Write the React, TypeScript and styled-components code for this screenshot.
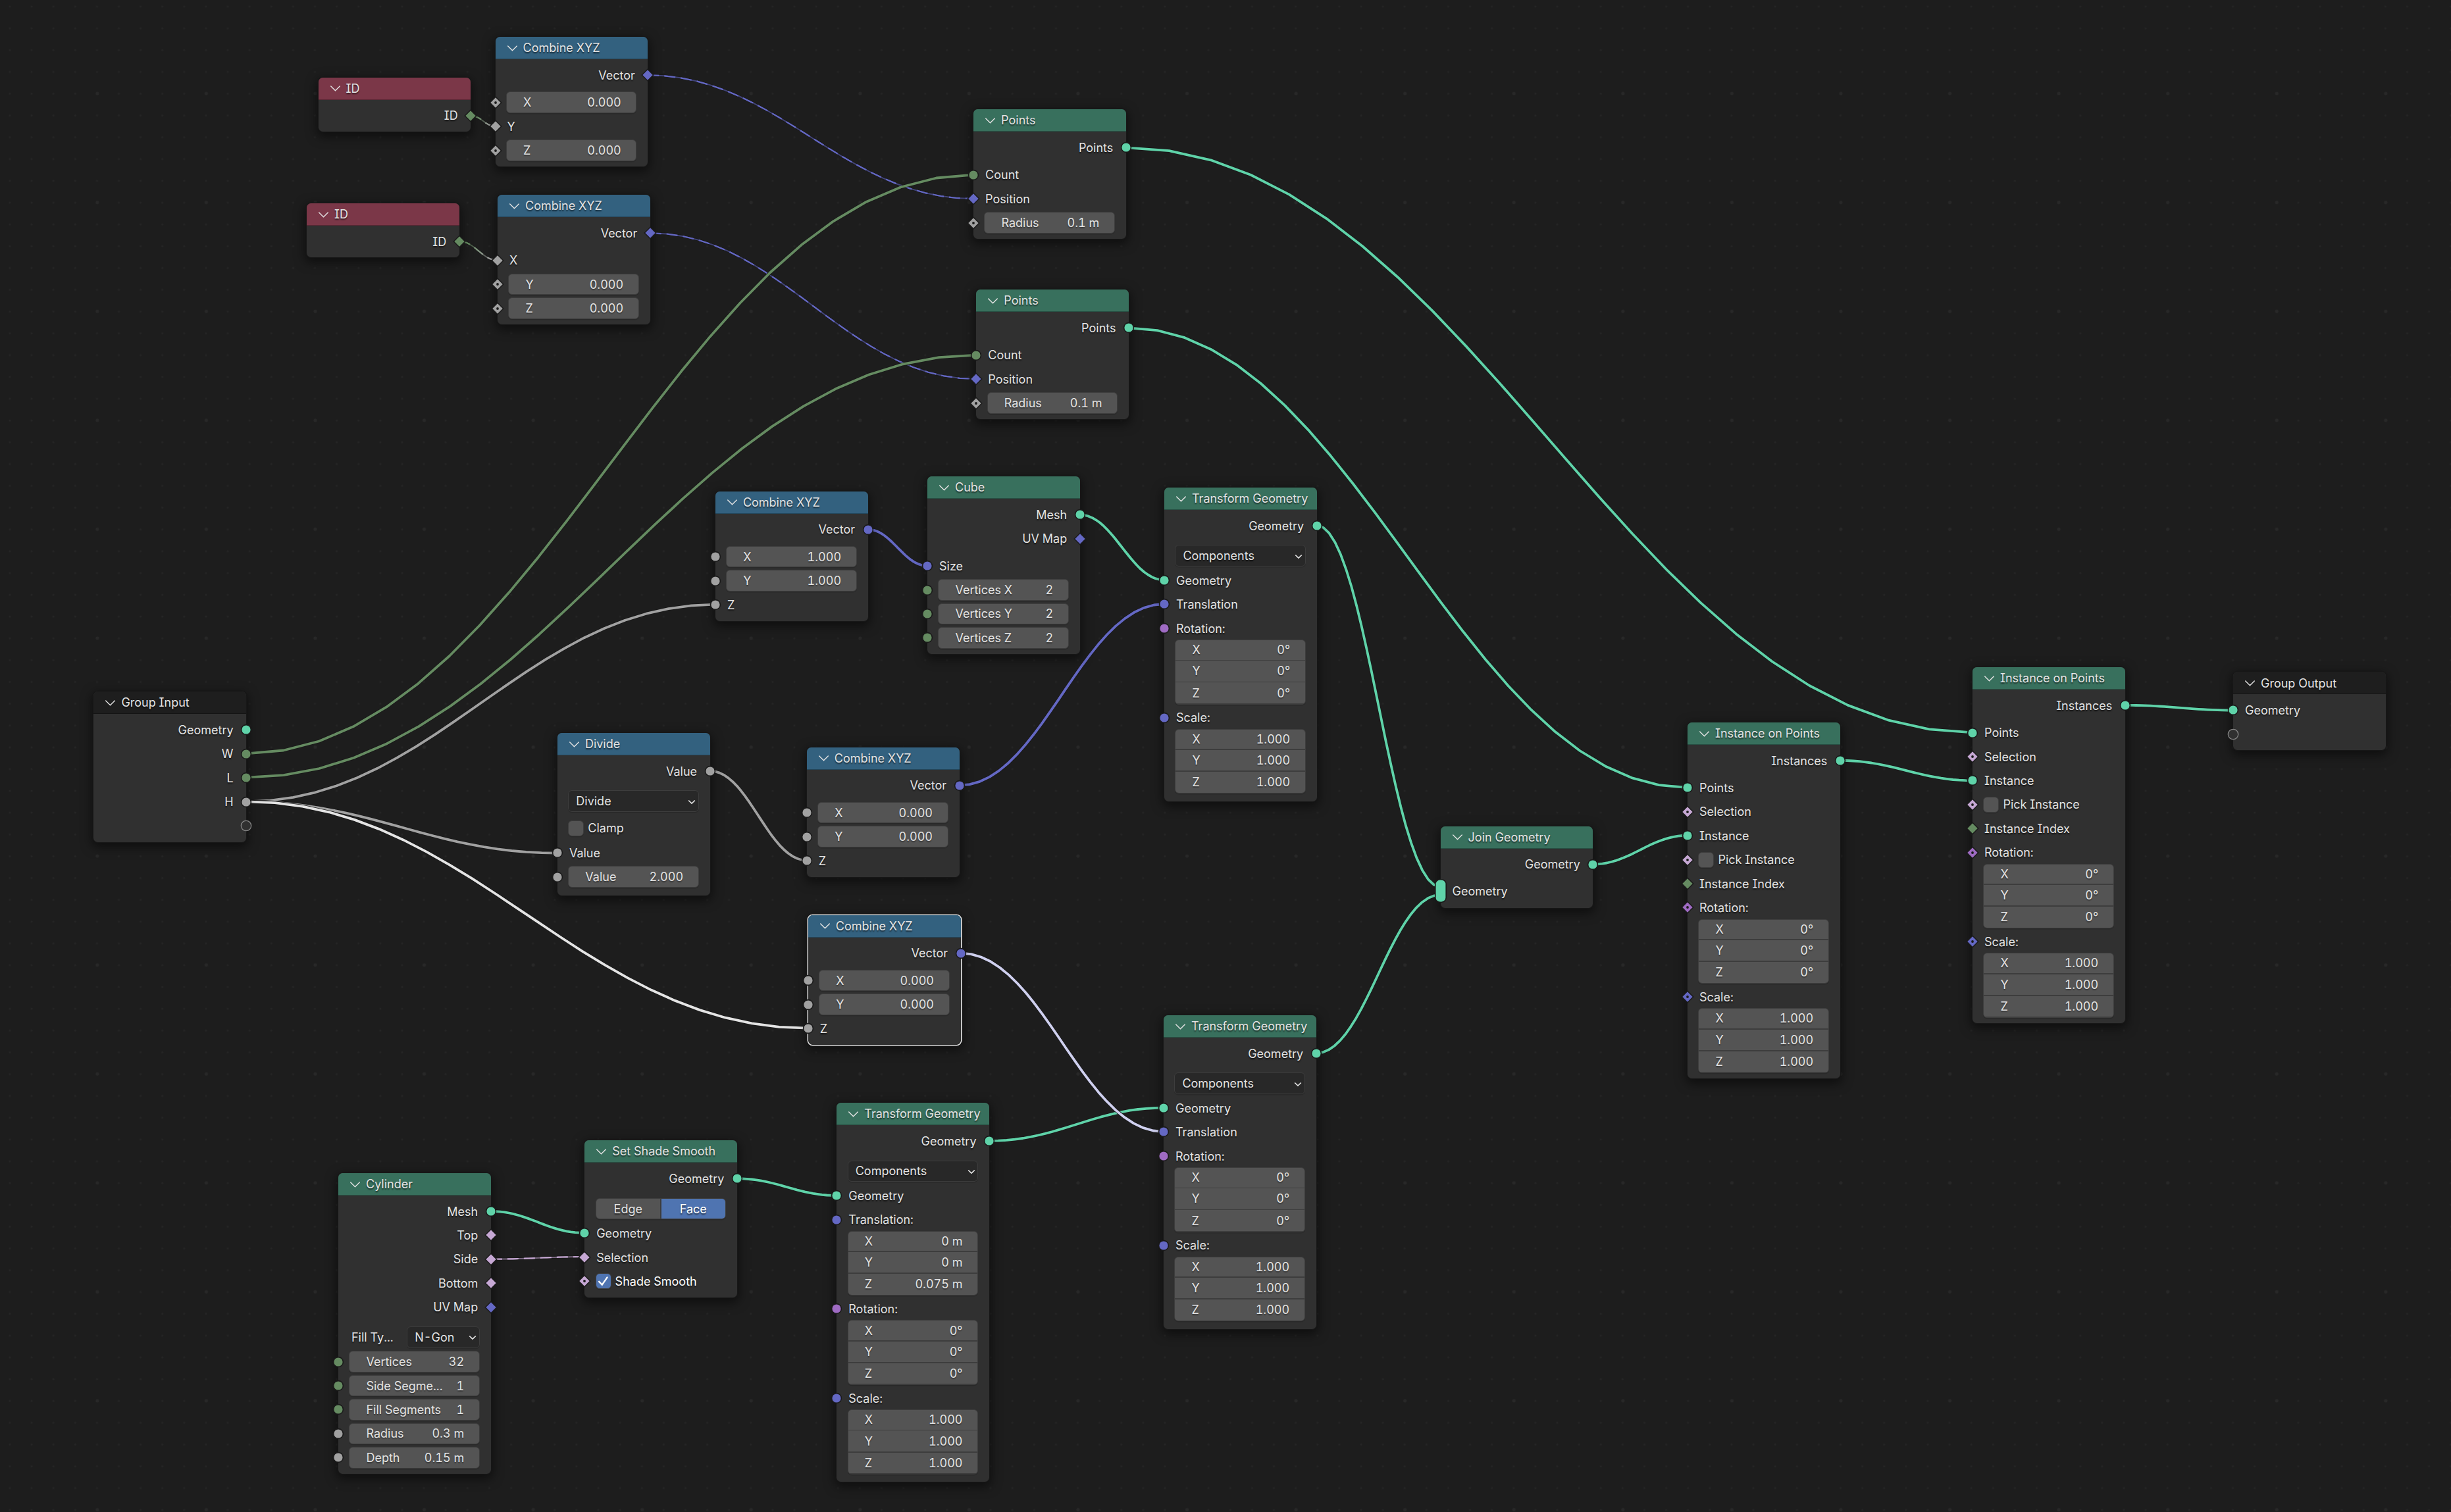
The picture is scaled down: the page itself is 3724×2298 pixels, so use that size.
import React from 'react';
import styled, { createGlobalStyle, css } from 'styled-components';

/* One interface unit of the editor, in pixels. */
const U = 1.6557;
const ROW = 20 * U;
const NODE_W = 231.8;

const Global = createGlobalStyle`
  html, body { margin: 0; padding: 0; background: #1d1d1d; }
`;

const tone = {
  converter: '#33617f',
  input: '#7b3748',
  geometry: '#38705d',
  group: '#1e1e1e',
};

const sock = {
  geometry: '#5fd3a9',
  int: '#658b61',
  float: '#a1a1a1',
  vector: '#6468c4',
  bool: '#c6a8d4',
  rotation: '#9f6bc3',
};

type Tone = keyof typeof tone;
type Sock = keyof typeof sock;
type Shape = 'circle' | 'diamond' | 'diamondDot' | 'virtual' | 'multi';

const Canvas = styled.main`
  position: relative;
  width: 3724px;
  height: 2298px;
  overflow: hidden;
  background: #1d1d1d;
  color: #e3e3e3;
  font-family: Inter, 'Liberation Sans', sans-serif;
  font-size: 18px;
  font-feature-settings: 'tnum', 'cv08';
  line-height: 1;
`;

const Wires = styled.svg`
  position: absolute;
  inset: 0;
`;

const NodeBox = styled.section<{ $selected?: boolean }>`
  position: absolute;
  width: ${NODE_W}px;
  border-radius: 6.5px;
  background: #303030;
  box-shadow: 0 0 0 1.3px ${p => (p.$selected ? '#fff' : '#171717')}, 0 5px 16px 3px rgba(0, 0, 0, 0.5);
`;

const Header = styled.header<{ $tone: Tone }>`
  display: flex;
  align-items: center;
  gap: 9px;
  box-sizing: border-box;
  height: 34px;
  padding: 1.6px 0 0 18px;
  border-radius: 6.5px 6.5px 0 0;
  background: ${p => tone[p.$tone]};
  border-bottom: 1.3px solid rgba(0, 0, 0, 0.28);
  text-shadow: 0 1.5px 2px rgba(0, 0, 0, 0.6);
  white-space: nowrap;
`;

const Body = styled.div`
  display: flex;
  flex-direction: column;
  padding-top: 7.6px;
`;

const Group = styled.div<{ $top?: number; $gap?: number }>`
  display: flex;
  flex-direction: column;
  gap: ${p => p.$gap ?? 2 * U}px;
  margin-top: ${p => p.$top ?? 0}px;
`;

const Row = styled.div<{ $out?: boolean; $label?: boolean }>`
  position: relative;
  display: flex;
  align-items: center;
  box-sizing: border-box;
  height: ${ROW}px;
  padding: 0 17px 0 16.4px;
  text-shadow: 0 1.5px 2px rgba(0, 0, 0, 0.6);
  white-space: nowrap;
  ${p => p.$label && css`padding: 1.3px 19.6px 0 18px;`}
  ${p => p.$out && css`justify-content: flex-end;`}
`;

const SocketMark = styled.svg<{ $out?: boolean }>`
  position: absolute;
  top: 50%;
  ${p => (p.$out ? 'right: -20px;' : 'left: -20px;')}
  width: 40px;
  height: 40px;
  margin-top: -20px;
  overflow: visible;
`;

const widget = css`
  box-sizing: border-box;
  border: 1.6px solid #3d3d3d;
  border-radius: 6px;
  box-shadow: 0 1.5px 0 rgba(0, 0, 0, 0.14);
`;

const Field = styled.div`
  ${widget}
  display: flex;
  flex: 1;
  align-items: center;
  justify-content: space-between;
  height: 32.6px;
  padding: 0.9px 22.6px 0 25px;
  background: #545454;
  text-shadow: 0 1.5px 1.5px rgba(0, 0, 0, 0.35);
`;

const Dropdown = styled.div<{ $width?: number }>`
  ${widget}
  display: flex;
  flex: ${p => (p.$width ? `0 0 ${p.$width}px` : '1')};
  align-items: center;
  justify-content: space-between;
  height: 32.6px;
  padding: 0.9px 3.6px 0 11px;
  background: #282828;
`;

const FillLabel = styled.span`
  flex: 1;
  padding: 1px 0 0 3.6px;
`;

const Segments = styled.div`
  ${widget}
  display: grid;
  grid-template-columns: 1fr 1fr;
  gap: 1.5px;
  flex: 1;
  height: 31.6px;
  overflow: hidden;
  background: #3d3d3d;
`;

const Segment = styled.div<{ $on?: boolean }>`
  display: flex;
  align-items: center;
  justify-content: center;
  padding-top: 1px;
  background: ${p => (p.$on ? '#4f74b1' : '#545454')};
  color: ${p => (p.$on ? '#fff' : '#e3e3e3')};
`;

const CheckBox = styled.span<{ $on?: boolean }>`
  ${widget}
  display: flex;
  flex: none;
  align-items: center;
  justify-content: center;
  width: 24px;
  height: 24px;
  margin-right: 6px;
  background: ${p => (p.$on ? '#4f74b1' : '#545454')};
`;

const CheckLabel = styled.span<{ $on?: boolean }>`
  padding-top: 1.2px;
  color: ${p => (p.$on ? '#fff' : '#e3e3e3')};
`;

const Block = styled.div`
  ${widget}
  display: grid;
  grid-template-rows: 29.7px 31.4px 31.6px;
  gap: 1.7px;
  height: 98.6px;
  margin: -2.8px 17px 0.2px 16.4px;
  padding-bottom: 0.4px;
  overflow: hidden;
  background: #3d3d3d;
`;

const BlockRow = styled.div`
  display: flex;
  align-items: center;
  justify-content: space-between;
  padding: 0.7px 22.6px 0 25px;
  background: #545454;
  text-shadow: 0 1.5px 1.5px rgba(0, 0, 0, 0.35);
`;

const Collapse = () => (
  <svg width="15" height="9" viewBox="0 0 15 9" fill="none">
    <path d="M.7.9 7.5 7.7 14.3.9" stroke="#e3e3e3" strokeWidth="1.4" strokeLinecap="round" />
  </svg>
);

const Caret = () => (
  <svg width="12" height="9" viewBox="0 0 12 9" fill="none">
    <path d="M1.2 2.5 6 7l4.8-4.5" stroke="#e3e3e3" strokeWidth="1.7" />
  </svg>
);

const Tick = () => (
  <svg width="17" height="17" viewBox="0 0 17 17" fill="none">
    <path d="M2.2 8.8 6.8 13.6 14.6 2.4" stroke="#fff" strokeWidth="2.4" strokeLinecap="round" />
  </svg>
);

const Socket = ({ type = 'float', shape = 'circle', out }: { type?: Sock; shape?: Shape; out?: boolean }) => (
  <SocketMark $out={out} viewBox="-20 -20 40 40">
    {shape === 'circle' && <circle r="7.4" fill={sock[type]} stroke="#1a1a1a" strokeWidth="1.6" />}
    {shape === 'virtual' && <circle r="7.7" fill="#303030" stroke="#868686" strokeWidth="1.3" />}
    {shape === 'multi' && (
      <rect x="-8.2" y="-17.2" width="16.4" height="34.4" rx="7" fill={sock[type]} stroke="#1a1a1a" strokeWidth="1.6" />
    )}
    {(shape === 'diamond' || shape === 'diamondDot') && (
      <path d="M0-8.7 8.7 0 0 8.7-8.7 0Z" fill={sock[type]} stroke="#1a1a1a" strokeWidth="1.5" />
    )}
    {shape === 'diamondDot' && <circle r="1.9" fill="#1a1a1a" />}
  </SocketMark>
);

type SP = { type?: Sock; shape?: Shape };

const Out = ({ label, ...s }: SP & { label?: string }) => (
  <Row $out $label>
    {label}
    <Socket out {...s} />
  </Row>
);

const In = ({ label, ...s }: SP & { label?: string }) => (
  <Row $label>
    <Socket {...s} />
    {label}
  </Row>
);

const Value = ({ label, value, ...s }: SP & { label: string; value: string }) => (
  <Row>
    <Socket {...s} />
    <Field>
      <span>{label}</span>
      <span>{value}</span>
    </Field>
  </Row>
);

const Check = ({ label, on, socket, type, shape }: SP & { label: string; on?: boolean; socket?: boolean }) => (
  <Row>
    {socket && <Socket type={type} shape={shape} />}
    <CheckBox $on={on}>{on && <Tick />}</CheckBox>
    <CheckLabel $on={on}>{label}</CheckLabel>
  </Row>
);

const Select = ({ value }: { value: string }) => (
  <Row>
    <Dropdown>
      {value}
      <Caret />
    </Dropdown>
  </Row>
);

const Triple = ({ label, values, ...s }: SP & { label: string; values: string[] }) => (
  <>
    <In label={label} {...s} />
    <Block>
      {values.map((v, i) => (
        <BlockRow key={i}>
          <span>{'XYZ'[i]}</span>
          <span>{v}</span>
        </BlockRow>
      ))}
    </Block>
  </>
);

type NodeProps = {
  x: number;
  y: number;
  h: number;
  title: string;
  tone: Tone;
  selected?: boolean;
  children: React.ReactNode;
};

const Node = ({ x, y, h, title, tone: t, selected, children }: NodeProps) => (
  <NodeBox $selected={selected} style={{ left: x, top: y, height: h }}>
    <Header $tone={t}>
      <Collapse />
      {title}
    </Header>
    <Body>{children}</Body>
  </NodeBox>
);

const INPUT_GAP = 5 * U;
const PROPS_GAP = 12.6;
const AFTER_PROPS = 4.3;

const IdNode = (p: { x: number; y: number }) => (
  <Node {...p} h={82.7} title="ID" tone="input">
    <Out label="ID" type="int" shape="diamond" />
  </Node>
);

type Axis = string | null;

const CombineNode = ({ axes, field, ...p }: { x: number; y: number; axes: Axis[]; field?: boolean; selected?: boolean }) => (
  <Node {...p} h={197.3} title="Combine XYZ" tone="converter">
    <Out label="Vector" type="vector" shape={field ? 'diamond' : 'circle'} />
    <Group $top={INPUT_GAP}>
      {axes.map((v, i) =>
        v === null ? (
          <In key={i} label={'XYZ'[i]} shape={field ? 'diamond' : 'circle'} />
        ) : (
          <Value key={i} label={'XYZ'[i]} value={v} shape={field ? 'diamondDot' : 'circle'} />
        ),
      )}
    </Group>
  </Node>
);

const PointsNode = (p: { x: number; y: number }) => (
  <Node {...p} h={197.3} title="Points" tone="geometry">
    <Out label="Points" type="geometry" />
    <Group $top={INPUT_GAP}>
      <In label="Count" type="int" />
      <In label="Position" type="vector" shape="diamond" />
      <Value label="Radius" value="0.1 m" shape="diamondDot" />
    </Group>
  </Node>
);

const TransformNode = ({ translation, h, ...p }: { x: number; y: number; h: number; translation?: string[] }) => (
  <Node {...p} h={h} title="Transform Geometry" tone="geometry">
    <Out label="Geometry" type="geometry" />
    <Group $top={PROPS_GAP}>
      <Select value="Components" />
    </Group>
    <Group $top={AFTER_PROPS}>
      <In label="Geometry" type="geometry" />
      {translation ? (
        <Triple label="Translation:" type="vector" values={translation} />
      ) : (
        <In label="Translation" type="vector" />
      )}
      <Triple label="Rotation:" type="rotation" values={['0°', '0°', '0°']} />
      <Triple label="Scale:" type="vector" values={['1.000', '1.000', '1.000']} />
    </Group>
  </Node>
);

const InstanceNode = (p: { x: number; y: number }) => (
  <Node {...p} h={540.8} title="Instance on Points" tone="geometry">
    <Out label="Instances" type="geometry" />
    <Group $top={INPUT_GAP}>
      <In label="Points" type="geometry" />
      <In label="Selection" type="bool" shape="diamondDot" />
      <In label="Instance" type="geometry" />
      <Check label="Pick Instance" socket type="bool" shape="diamondDot" />
      <In label="Instance Index" type="int" shape="diamond" />
      <Triple label="Rotation:" type="rotation" shape="diamondDot" values={['0°', '0°', '0°']} />
      <Triple label="Scale:" type="vector" shape="diamondDot" values={['1.000', '1.000', '1.000']} />
    </Group>
  </Node>
);

type Wire = { from: [number, number]; to: [number, number]; color: string; end?: string; field?: boolean };

const wires: Wire[] = [
  { from: [715.3, 175.7], to: [752.6, 192], color: sock.int, end: sock.float, field: true },
  { from: [697.9, 366.7], to: [756, 395.7], color: sock.int, end: sock.float, field: true },
  { from: [984.3, 114.3], to: [1479, 302], color: sock.vector, field: true },
  { from: [987.7, 354.3], to: [1483.3, 576], color: sock.vector, field: true },
  { from: [374.2, 1145.3], to: [1479, 265.7], color: sock.int },
  { from: [374.2, 1181.7], to: [1483.3, 539.6], color: sock.int },
  { from: [374.2, 1218.3], to: [1086.9, 918.7], color: sock.float },
  { from: [374.2, 1218.3], to: [846.9, 1296.6], color: sock.float },
  { from: [1078.5, 1171.7], to: [1225.9, 1307.7], color: sock.float },
  { from: [1318.6, 804.7], to: [1409.1, 860], color: sock.vector },
  { from: [1457.5, 1193.7], to: [1769, 918], color: sock.vector },
  { from: [1640.6, 782.3], to: [1769, 881.5], color: sock.geometry },
  { from: [2000.8, 798.7], to: [2188.6, 1348], color: sock.geometry },
  { from: [1999.8, 1600.7], to: [2188.6, 1360], color: sock.geometry },
  { from: [1711, 224.3], to: [2997, 1113.3], color: sock.geometry },
  { from: [1715, 498.3], to: [2564, 1197], color: sock.geometry },
  { from: [2420.3, 1313.5], to: [2564, 1269.8], color: sock.geometry },
  { from: [2795.8, 1155.8], to: [2997, 1186.4], color: sock.geometry },
  { from: [3229, 1071.8], to: [3393, 1079.5], color: sock.geometry },
  { from: [745.9, 1840.9], to: [888.2, 1873.9], color: sock.geometry },
  { from: [745.9, 1913.7], to: [888.2, 1910.1], color: sock.bool, field: true },
  { from: [1120, 1791.3], to: [1271.3, 1817], color: sock.geometry },
  { from: [1503, 1734], to: [1768, 1683.7], color: sock.geometry },
  { from: [374.2, 1218.3], to: [1227.8, 1562.7], color: '#e4e4e4' },
  { from: [1459.6, 1448.7], to: [1768, 1720], color: '#cfd0ef' },
];

/* Wires are drawn as a polyline sampled from a bezier with horizontal handles. */
const STEPS = 23;
const trace = ({ from: [x1, y1], to: [x2, y2] }: Wire) => {
  const pts: string[] = [];
  for (let i = 0; i <= STEPS; i++) {
    const t = i / STEPS;
    const s = 1 - t;
    const b1 = 3 * s * s * t;
    const b2 = 3 * s * t * t;
    const fx = b1 * 0.4 + b2 * 0.6 + t * t * t;
    const fy = b2 + t * t * t;
    pts.push(`${(x1 + (x2 - x1) * fx).toFixed(1)},${(y1 + (y2 - y1) * fy).toFixed(1)}`);
  }
  return pts.join(' ');
};

const GRID = 33.114;

const WireLayer = () => (
  <Wires width="3724" height="2298" viewBox="0 0 3724 2298" fill="none">
    <defs>
      <pattern id="minor" x={-1.6} y={-6.7} width={GRID} height={GRID} patternUnits="userSpaceOnUse">
        <circle cx={GRID / 2} cy={GRID / 2} r="1.5" fill="#252525" />
      </pattern>
      <pattern id="major" x={147.9 - GRID * 2.5} y={142.1 - GRID * 2.5} width={GRID * 5} height={GRID * 5} patternUnits="userSpaceOnUse">
        <circle cx={GRID * 2.5} cy={GRID * 2.5} r="2.5" fill="#282828" />
      </pattern>
      {wires.map((w, i) =>
        w.end ? (
          <linearGradient key={i} id={`wire${i}`} gradientUnits="userSpaceOnUse" x1={w.from[0]} y1={w.from[1]} x2={w.to[0]} y2={w.to[1]}>
            <stop offset="0.2" stopColor={w.color} />
            <stop offset="0.8" stopColor={w.end} />
          </linearGradient>
        ) : null,
      )}
    </defs>
    <rect width="3724" height="2298" fill="url(#minor)" />
    <rect width="3724" height="2298" fill="url(#major)" />
    {wires.map((w, i) => {
      const points = trace(w);
      const stroke = w.end ? `url(#wire${i})` : w.color;
      return w.field ? (
        <g key={i} strokeLinejoin="round">
          <polyline points={points} stroke="#191919" strokeWidth="3.6" />
          <polyline points={points} stroke={stroke} strokeWidth="2" strokeOpacity="0.55" />
          <polyline points={points} stroke={stroke} strokeWidth="2.2" strokeDasharray="17 8" />
        </g>
      ) : (
        <g key={i} strokeLinejoin="round">
          <polyline points={points} stroke="#191919" strokeWidth="5.4" />
          <polyline points={points} stroke={stroke} strokeWidth="3.8" />
        </g>
      );
    })}
  </Wires>
);

export default function App() {
  return (
    <Canvas>
      <Global />
      <WireLayer />

      <IdNode x={483.6} y={117.6} />
      <IdNode x={466.1} y={308.8} />
      <CombineNode x={752.6} y={56.2} field axes={['0.000', null, '0.000']} />
      <CombineNode x={756} y={296.2} field axes={[null, '0.000', '0.000']} />
      <PointsNode x={1479.1} y={166.2} />
      <PointsNode x={1483.3} y={440.2} />

      <CombineNode x={1086.9} y={746.6} axes={['1.000', '1.000', null]} />
      <Node x={1409} y={724.2} h={270.1} title="Cube" tone="geometry">
        <Group>
          <Out label="Mesh" type="geometry" />
          <Out label="UV Map" type="vector" shape="diamond" />
        </Group>
        <Group $top={INPUT_GAP}>
          <In label="Size" type="vector" />
          <Value label="Vertices X" value="2" type="int" />
          <Value label="Vertices Y" value="2" type="int" />
          <Value label="Vertices Z" value="2" type="int" />
        </Group>
      </Node>
      <TransformNode x={1769} y={740.8} h={477} />

      <Node x={142.4} y={1051.2} h={228.8} title="Group Input" tone="group">
        <Group>
          <Out label="Geometry" type="geometry" />
          <Out label="W" type="int" />
          <Out label="L" type="int" />
          <Out label="H" />
          <Out shape="virtual" />
        </Group>
      </Node>

      <Node x={846.9} y={1113.9} h={246.8} title="Divide" tone="converter">
        <Out label="Value" />
        <Group $top={PROPS_GAP} $gap={7.9}>
          <Select value="Divide" />
          <Check label="Clamp" />
        </Group>
        <Group $top={AFTER_PROPS}>
          <In label="Value" />
          <Value label="Value" value="2.000" />
        </Group>
      </Node>
      <CombineNode x={1225.8} y={1135.6} axes={['0.000', '0.000', null]} />
      <CombineNode x={1227.8} y={1390.6} axes={['0.000', '0.000', null]} selected />

      <Node x={514} y={1782.8} h={457} title="Cylinder" tone="geometry">
        <Group>
          <Out label="Mesh" type="geometry" />
          <Out label="Top" type="bool" shape="diamond" />
          <Out label="Side" type="bool" shape="diamond" />
          <Out label="Bottom" type="bool" shape="diamond" />
          <Out label="UV Map" type="vector" shape="diamond" />
        </Group>
        <Group $top={PROPS_GAP}>
          <Row>
            <FillLabel>Fill Ty...</FillLabel>
            <Dropdown $width={110.5}>
              N-Gon
              <Caret />
            </Dropdown>
          </Row>
        </Group>
        <Group $top={AFTER_PROPS}>
          <Value label="Vertices" value="32" type="int" />
          <Value label="Side Segme..." value="1" type="int" />
          <Value label="Fill Segments" value="1" type="int" />
          <Value label="Radius" value="0.3 m" />
          <Value label="Depth" value="0.15 m" />
        </Group>
      </Node>

      <Node x={888.2} y={1733.2} h={238.7} title="Set Shade Smooth" tone="geometry">
        <Out label="Geometry" type="geometry" />
        <Group $top={PROPS_GAP}>
          <Row>
            <Segments>
              <Segment>Edge</Segment>
              <Segment $on>Face</Segment>
            </Segments>
          </Row>
        </Group>
        <Group $top={AFTER_PROPS}>
          <In label="Geometry" type="geometry" />
          <In label="Selection" type="bool" shape="diamond" />
          <Check label="Shade Smooth" on socket type="bool" shape="diamondDot" />
        </Group>
      </Node>

      <TransformNode x={1271.3} y={1676} h={576.3} translation={['0 m', '0 m', '0.075 m']} />
      <TransformNode x={1768} y={1542.8} h={477} />

      <Node x={2188.6} y={1255.5} h={124.2} title="Join Geometry" tone="geometry">
        <Out label="Geometry" type="geometry" />
        <Group $top={INPUT_GAP - 0.6}>
          <In label="Geometry" type="geometry" shape="multi" />
        </Group>
      </Node>
      <InstanceNode x={2564} y={1097.9} />
      <InstanceNode x={2997} y={1014} />

      <Node x={3393} y={1021.3} h={119.2} title="Group Output" tone="group">
        <Group>
          <In label="Geometry" type="geometry" />
          <In shape="virtual" />
        </Group>
      </Node>
    </Canvas>
  );
}
